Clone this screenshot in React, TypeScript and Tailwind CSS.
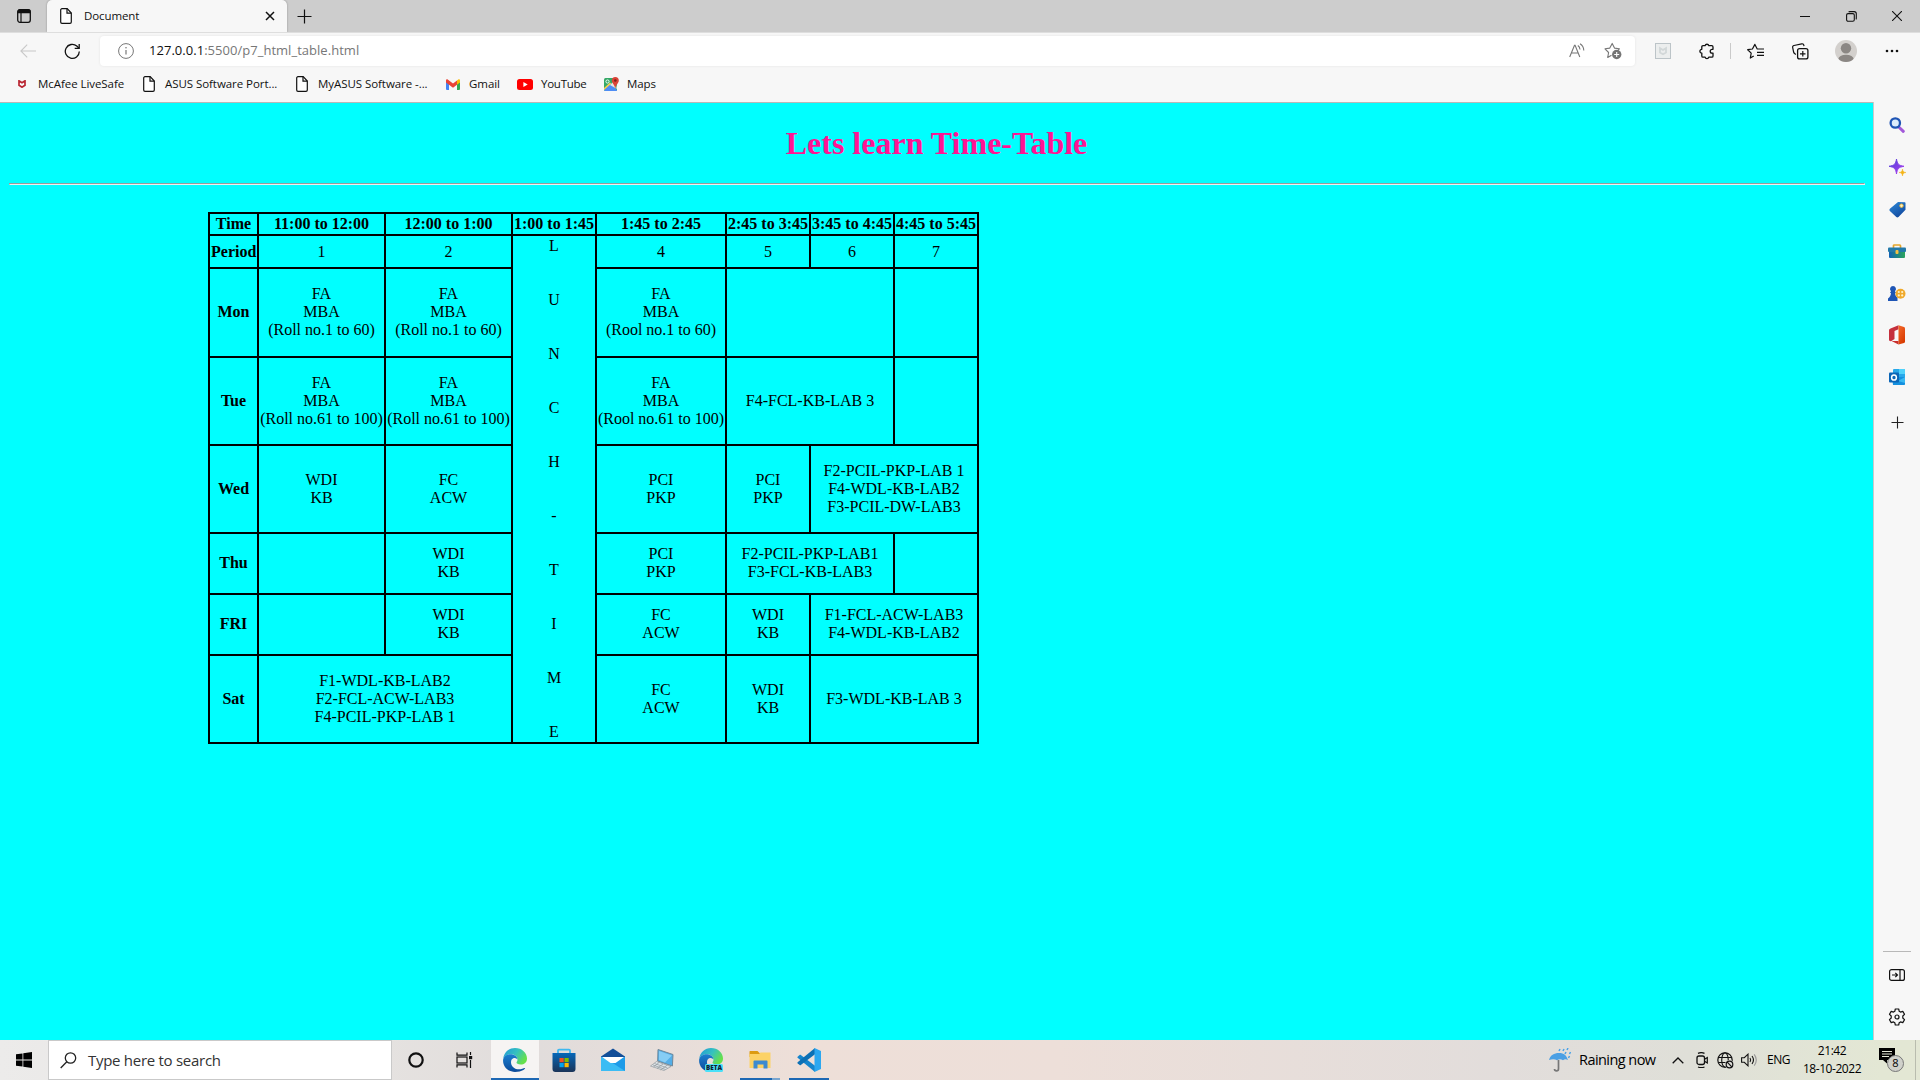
import React from "react";

type Cell = { lines?: string[]; span?: number; lunch?: boolean };
type Row = { day: string; height: string; cells: Cell[] };

const times = ["11:00 to 12:00", "12:00 to 1:00", "1:00 to 1:45", "1:45 to 2:45", "2:45 to 3:45", "3:45 to 4:45", "4:45 to 5:45"];
const c = (...lines: string[]): Cell => ({ lines });
const wide = (...lines: string[]): Cell => ({ lines, span: 2 });

const rows: Row[] = [
  { day: "Period", height: "h-[33px]", cells: [c("1"), c("2"), { lunch: true }, c("4"), c("5"), c("6"), c("7")] },
  { day: "Mon", height: "h-[89px] [&>td]:pb-px [&>th]:pb-[2px]", cells: [c("FA", "MBA", "(Roll no.1 to 60)"), c("FA", "MBA", "(Roll no.1 to 60)"), c("FA", "MBA", "(Rool no.1 to 60)"), wide(), c()] },
  { day: "Tue", height: "h-[88px]", cells: [c("FA", "MBA", "(Roll no.61 to 100)"), c("FA", "MBA", "(Roll no.61 to 100)"), c("FA", "MBA", "(Rool no.61 to 100)"), wide("F4-FCL-KB-LAB 3"), c()] },
  { day: "Wed", height: "h-[88px]", cells: [c("WDI", "KB"), c("FC", "ACW"), c("PCI", "PKP"), c("PCI", "PKP"), wide("F2-PCIL-PKP-LAB 1", "F4-WDL-KB-LAB2", "F3-PCIL-DW-LAB3")] },
  { day: "Thu", height: "h-[61px] [&>td]:pb-px [&>th]:pb-[2px]", cells: [c(), c("WDI", "KB"), c("PCI", "PKP"), wide("F2-PCIL-PKP-LAB1", "F3-FCL-KB-LAB3"), c()] },
  { day: "FRI", height: "h-[61px] [&>td]:pb-px [&>th]:pb-[2px]", cells: [c(), c("WDI", "KB"), c("FC", "ACW"), c("WDI", "KB"), wide("F1-FCL-ACW-LAB3", "F4-WDL-KB-LAB2")] },
  { day: "Sat", height: "h-[88px]", cells: [wide("F1-WDL-KB-LAB2", "F2-FCL-ACW-LAB3", "F4-PCIL-PKP-LAB 1"), c("FC", "ACW"), c("WDI", "KB"), wide("F3-WDL-KB-LAB 3")] },
];

function Svg({ w, h = w, children, className = "" }: { w: number; h?: number; children: React.ReactNode; className?: string }) {
  return (
    <svg width={w} height={h} viewBox={`0 0 ${w} ${h}`} fill="none" className={`block shrink-0 ${className}`}>
      {children}
    </svg>
  );
}

function Slot({ className, children }: { className: string; children?: React.ReactNode }) {
  return <div className={`flex shrink-0 items-center justify-center ${className}`}>{children}</div>;
}

function DocIcon() {
  return (
    <Svg w={12} h={16}>
      <path d="M2 .7h5.2L11.3 5v9a1.3 1.3 0 0 1-1.3 1.3H2A1.3 1.3 0 0 1 .7 14V2A1.3 1.3 0 0 1 2 .7Z" stroke="#111" strokeWidth="1.2" fill="#fff" />
      <path d="M7 .8V5.2h4.2" stroke="#111" strokeWidth="1.2" />
    </Svg>
  );
}

function TabBar() {
  return (
    <div className="flex h-8 bg-[#cdcdcd]">
      <Slot className="w-[47px]">
        <Svg w={16}>
          <rect x="1.7" y="1.7" width="12.6" height="12.6" rx="2.2" stroke="#111" strokeWidth="1.3" />
          <path d="M1.5 3.5C1.5 2 2.3 1.3 3.500 1.300h9c1.200 0 2 .7 2 2.200V5.300H1.500Z" fill="#111" />
          <path d="M5 5v9" stroke="#111" strokeWidth="1.2" />
        </Svg>
      </Slot>
      <div className="flex w-60 items-center rounded-t-[5px] bg-[#f7f7f7] pl-[13px] shadow-[0_0_2px_rgba(0,0,0,0.35)]">
        <DocIcon />
        <span className="ml-3 text-[11.5px] tracking-[-0.1px]">Document</span>
        <Svg w={10} className="mr-[12px] ml-auto">
          <path d="m1 1 8 8M9 1 1 9" stroke="#111" strokeWidth="1.5" />
        </Svg>
      </div>
      <Slot className="w-[35px]">
        <Svg w={15}>
          <path d="M7.500 0.500v14M.5 7.500h14" stroke="#111" strokeWidth="1.200" />
        </Svg>
      </Slot>
      <div className="ml-auto flex">
        <Slot className="w-[46px]">
          <Svg w={10}><path d="M0 5.500h10" stroke="#111" /></Svg>
        </Slot>
        <Slot className="w-[46px]">
          <Svg w={11}>
            <rect x=".6" y="2.600" width="7.700" height="7.700" rx="1.500" stroke="#111" strokeWidth="1.100" />
            <path d="M2.600 1C3 .7 3.300.6 3.800.6H8.200a2.100 2.100 0 0 1 2.100 2.100V7.200c0 .5-.1.800-.4 1.200" stroke="#111" strokeWidth="1.100" />
          </Svg>
        </Slot>
        <Slot className="w-[46px]">
          <Svg w={10}><path d="m0 0 10 10M10 0 0 10" stroke="#111" strokeWidth="1.100" /></Svg>
        </Slot>
      </div>
    </div>
  );
}

function Toolbar() {
  return (
    <div className="flex h-[38px] items-center border-t border-[#dedede] bg-[#f7f7f7] pb-px">
      <Slot className="ml-5 w-4">
        <Svg w={16} h={14}><path d="M16 7H1M7.200.7.900 7l6.300 6.300" stroke="#c8c8c8" strokeWidth="1.100" /></Svg>
      </Slot>
      <Slot className="ml-7 w-4">
        <Svg w={17}>
          <path d="M15.300 8.500A7 7 0 1 1 12.800 3L15 5.200" stroke="#111" strokeWidth="1.300" />
          <path d="M15.200 1v4.400h-4.500" stroke="#111" strokeWidth="1.300" />
        </Svg>
      </Slot>
      <div className="ml-5 flex h-[30px] w-[1535px] items-center rounded-[4px] bg-white pl-[18px] shadow-[0_0_3px_rgba(0,0,0,0.08)]">
        <Svg w={16}>
          <circle cx="8" cy="8" r="7.400" stroke="#777" />
          <path d="M8 7v4.500" stroke="#777" strokeWidth="1.200" />
          <circle cx="8" cy="4.800" r=".8" fill="#777" />
        </Svg>
        <span className="ml-[15px] text-[13px] tracking-[0.03px] text-[#777]">
          <span className="text-[#111]">127.0.0.1</span>:5500/p7_html_table.html
        </span>
        <Svg w={16} className="ml-auto">
          <path d="M.7 14 5.500 2.300h.6L10.800 14M2.400 10h6.800" stroke="#777" strokeWidth="1.100" />
          <path d="M8.800 2.500c1.400.9 2.100 2.200 2.200 4M11 .8c2.400 1.400 3.700 3.700 3.800 6.800" stroke="#777" strokeWidth="1.100" />
        </Svg>
        <Svg w={18} className="mr-[13px] ml-[19px]">
          <path d="M7.500 13.200 3.700 15.500l.9-5L1 6.800l4.800-.7L8.200 1.400l2.300 4.700 4.900.7-1.300 1.300" stroke="#777" strokeWidth="1.100" strokeLinejoin="round" />
          <circle cx="12.700" cy="12.500" r="4.700" fill="#757575" />
          <path d="M12.700 10v5M10.200 12.500h5" stroke="#fff" strokeWidth="1.100" />
        </Svg>
      </div>
      <Slot className="ml-5 w-4">
        <Svg w={16}>
          <rect x=".5" y=".5" width="15" height="15" fill="#eceeee" stroke="#bcc4c8" />
          <path d="M5 5.200v4.200l3 1.800 3-1.800V5.200L8 7Z" stroke="#d2d7d8" strokeWidth="1.800" />
        </Svg>
      </Slot>
      <Slot className="ml-7 w-4">
        <Svg w={16} h={17}>
          <path d="M4 2.700h2.100a1.900 1.900 0 0 1 3.700 0h3a1.200 1.200 0 0 1 1.200 1.200V6.300h-.9a1.900 1.900 0 0 0 0 3.800h.9v2.800a1.200 1.200 0 0 1-1.200 1.200h-3a1.900 1.900 0 0 1-3.700 0H4a1.200 1.200 0 0 1-1.200-1.200V10.100a1.900 1.900 0 0 1 0-3.800V3.900A1.200 1.200 0 0 1 4 2.700Z" stroke="#111" strokeWidth="1.300" strokeLinejoin="round" />
        </Svg>
      </Slot>
      <div className="ml-[15px] h-4 w-px bg-[#cacaca]" />
      <Slot className="ml-4 w-[17px]">
        <Svg w={17}>
          <path d="M6.700 12.900 3.300 15l.9-4.900L.7 6.700l4.700-.7L7.900 1.400 10.200 6H14M10 9.300h7M10 12.300h7M10 6h7" stroke="#111" strokeWidth="1.200" strokeLinejoin="round" />
        </Svg>
      </Slot>
      <Slot className="ml-7 w-[17px]">
        <Svg w={17}>
          <rect x="5.600" y="5.600" width="10.300" height="10.300" rx="2" stroke="#111" strokeWidth="1.300" />
          <path d="M10.800 8v5.500M8 10.800h5.500M3.800 11.500 2.600 10.600C2 10.200 1.800 9.600 1.600 9L.7 4.600c-.3-1 .3-1.900 1.300-2.100L9.700.9c1-.2 1.900.3 2.100 1.300l.2 1" stroke="#111" strokeWidth="1.200" />
        </Svg>
      </Slot>
      <Slot className="ml-[26px] w-[22px]">
        <Svg w={22}>
          <clipPath id="avatar"><circle cx="11" cy="11" r="11" /></clipPath>
          <circle cx="11" cy="11" r="11" fill="#d3d0cd" />
          <g clipPath="url(#avatar)" fill="#8b8784"><circle cx="11" cy="8.200" r="5.200" /><ellipse cx="11" cy="19" rx="7.700" ry="4.300" /></g>
        </Svg>
      </Slot>
      <Slot className="ml-[27px] w-4">
        <Svg w={16} h={4}><circle cx="3" cy="2" r="1.300" fill="#111" /><circle cx="8" cy="2" r="1.300" fill="#111" /><circle cx="13" cy="2" r="1.300" fill="#111" /></Svg>
      </Slot>
    </div>
  );
}

function Bookmarks() {
  return (
    <div className="flex h-8 items-center bg-[#f7f7f7] pb-1 pl-[18px] text-[11.5px] tracking-[-0.06px]">
      <div className="flex w-[125px] items-center gap-3">
        <Svg w={8}><path d="M1 .8v4.400l3 2 3-2V.8L4 2.800Z" stroke="#b92632" strokeWidth="1.700" /></Svg>
        <span>McAfee LiveSafe</span>
      </div>
      <div className="flex w-[153px] items-center gap-[10px]"><DocIcon /><span>ASUS Software Port...</span></div>
      <div className="flex w-[150px] items-center gap-[10px]"><DocIcon /><span>MyASUS Software -...</span></div>
      <div className="flex w-[71px] items-center gap-[9px]">
        <Svg w={14} h={11}>
          <path d="M0 2v8a1 1 0 0 0 1 1h2V4Z" fill="#4285f4" />
          <path d="M14 2v8a1 1 0 0 1-1 1h-2V4Z" fill="#34a853" />
          <path d="M11 1.600 12.300.5C13 0 14 .5 14 1.500V3.500l-3 2.300Z" fill="#fbbc04" />
          <path d="M0 3.500v-2C0 .5 1 0 1.700.5L7 4.500l4-3v4.300L7 8.800Z" fill="#ea4335" />
        </Svg>
        <span>Gmail</span>
      </div>
      <div className="flex w-[87px] items-center gap-2">
        <Svg w={16} h={11}><rect width="16" height="11" rx="2.500" fill="#f00" /><path d="m6.400 3 4.300 2.500-4.300 2.500Z" fill="#fff" /></Svg>
        <span className="tracking-[-0.25px]">YouTube</span>
      </div>
      <div className="flex items-center gap-2">
        <Svg w={15}>
          <rect x="0" y="1" width="13" height="13" rx="1.500" fill="#34a866" />
          <path d="M0 12 6.500 6.500 13 13c0 .6-.5 1-1 1H1.500C.6 14 0 13.500 0 12Z" fill="#4e8df5" />
          <path d="m6 8 5-5 2 9Z" fill="#e8e5df" />
          <path d="m0 11 6-5.500 1.200 1.200L0 13Z" fill="#fbd04b" />
          <circle cx="3.500" cy="4.500" r="1.600" stroke="#fff" strokeWidth=".9" />
          <path d="M11.300 0A3.500 3.500 0 0 0 7.800 3.500c0 2.500 2.700 4 3.300 7.500h.4c.6-3.500 3.300-5 3.300-7.500A3.500 3.500 0 0 0 11.300 0Z" fill="#db4437" />
          <circle cx="11.300" cy="3.500" r="1.300" fill="#7b2119" />
        </Svg>
        <span>Maps</span>
      </div>
    </div>
  );
}

function TimeTable() {
  return (
    <table className="mt-[27px] ml-[208px] w-[771px] table-fixed border-collapse text-center text-base leading-[18px] text-black">
      <colgroup>
        <col className="w-[49px]" /><col className="w-[127px]" /><col className="w-[127px]" /><col className="w-[84px]" />
        <col className="w-[130px]" /><col className="w-[84px]" /><col className="w-[84px]" /><col className="w-[84px]" />
      </colgroup>
      <tbody>
        <tr className="h-[22px] whitespace-nowrap">
          <th className="border-2 border-black p-px">Time</th>
          {times.map((t) => <th key={t} className="border-2 border-black p-px">{t}</th>)}
        </tr>
        {rows.map((row) => (
          <tr key={row.day} className={row.height}>
            <th className="border-2 border-black p-px">{row.day}</th>
            {row.cells.map((cell, i) =>
              cell.lunch ? (
                <td key={i} rowSpan={7} className="border-2 border-black p-0">
                  {"LUNCH-TIME".split("").map((l, k) => <div key={k} className="mb-9 last:mb-0">{l}</div>)}
                </td>
              ) : (
                <td key={i} colSpan={cell.span} className="border-2 border-black p-0 whitespace-nowrap">
                  {cell.lines?.map((l) => <div key={l}>{l}</div>)}
                </td>
              )
            )}
          </tr>
        ))}
      </tbody>
    </table>
  );
}

function Sidebar() {
  return (
    <div className="flex w-[47px] shrink-0 flex-col items-center border-l border-[#c9c9c9] bg-[#f7f7f7] pt-[2px]">
      <Slot className="h-[42px]">
        <Svg w={16}>
          <path d="m9.800 10 4.500 4.300" stroke="#a259d9" strokeWidth="3" strokeLinecap="round" />
          <circle cx="6.300" cy="6" r="4.700" stroke="#1f55b5" strokeWidth="2.300" fill="#dcecfb" />
        </Svg>
      </Slot>
      <Slot className="h-[42px]">
        <Svg w={17}>
          <defs><linearGradient id="spark" x2="1" y2="1"><stop stopColor="#4a43d8" /><stop offset="1" stopColor="#b33bf0" /></linearGradient></defs>
          <path d="M7.500 0c.8 5 2 6.400 7.500 7.300-5.500 1-6.700 2.300-7.500 7.700C6.700 9.600 5.500 8.300 0 7.300 5.500 6.400 6.700 5 7.500 0Z" fill="url(#spark)" stroke="url(#spark)" strokeLinejoin="round" />
          <path d="M13.500 10c.4 2.500 1 3.100 3.500 3.500-2.500.4-3.100 1-3.500 3.500-.4-2.500-1-3.100-3.500-3.500 2.500-.4 3.100-1 3.500-3.500Z" fill="#f4b41a" stroke="#f4b41a" strokeWidth=".5" />
        </Svg>
      </Slot>
      <Slot className="h-[42px]">
        <Svg w={17}>
          <defs><linearGradient id="tag" x2=".6" y2="1"><stop stopColor="#2d8ad8" /><stop offset="1" stopColor="#124aa0" /></linearGradient></defs>
          <path d="m9 1 6.500.3c.6 0 1 .4 1 1v6.500L9.500 16c-.7.6-1.600.6-2.200 0L.9 10c-.6-.6-.6-1.500 0-2.200Z" fill="url(#tag)" />
          <circle cx="12.500" cy="4.700" r="1.700" fill="#fff3c9" stroke="#eebb3c" />
        </Svg>
      </Slot>
      <Slot className="h-[42px]">
        <Svg w={18} h={14}>
          <defs><linearGradient id="box" x2="1"><stop stopColor="#0f62b5" /><stop offset="1" stopColor="#2ba45b" /></linearGradient></defs>
          <path d="M5.500 4V1.800c0-.5.300-.8.800-.8h5.400c.5 0 .8.300.8.800V4" stroke="#e5a52b" strokeWidth="1.700" />
          <rect x="1" y="7" width="16" height="7" rx="1" fill="url(#box)" />
          <rect x="0" y="3.500" width="18" height="4.500" rx="1" fill="#2279a9" />
          <rect x="7.500" y="6" width="3" height="4" rx="1" fill="#f2c044" />
        </Svg>
      </Slot>
      <Slot className="h-[42px]">
        <Svg w={18} h={15}>
          <path d="M5 0a3 3 0 0 1 1.900 5.300L8 6.500 7 7.300c.2 2 1 3.200 2.500 4.500V15H0v-2.500C1.800 11.300 2.800 9.500 3 7.300L2 6.500l1.100-1.200A3 3 0 0 1 5 0Z" fill="#1e55b5" />
          <circle cx="12.500" cy="7.700" r="5" fill="#f0a92c" />
          <circle cx="10.800" cy="6" r="1.100" fill="#fff2cb" /><circle cx="14.200" cy="6" r="1.100" fill="#fff2cb" /><circle cx="10.800" cy="9.400" r="1.100" fill="#fff2cb" /><circle cx="14.200" cy="9.400" r="1.100" fill="#fff2cb" />
        </Svg>
      </Slot>
      <Slot className="h-[42px]">
        <Svg w={16} h={20}>
          <defs><linearGradient id="office" x2=".6" y2="1"><stop stopColor="#f56a2b" /><stop offset="1" stopColor="#d83b01" /></linearGradient></defs>
          <path d="M0 5.500C0 4.500.5 4 1.500 3.500L9.500.3v4L5.500 6v8l-3 2C1 16.500 0 15.800 0 14.500Z" fill="#c5303d" />
          <path d="M9.500.3 15 2c.6.2 1 .6 1 1.300v13.400c0 .7-.4 1.100-1 1.300l-5.500 1.600Z" fill="url(#office)" />
          <path d="M2.500 16h7v3.500Z" fill="#c92f2c" />
        </Svg>
      </Slot>
      <Slot className="h-[42px]">
        <Svg w={16}>
          <rect x="4" y="0" width="12" height="10" rx="1" fill="#28a8ea" /><path d="M10 0h6v5h-6Z" fill="#50d2fb" />
          <path d="M3 8h13v7c0 .6-.4 1-1 1H4Z" fill="#1590df" /><path d="m9 12 7-4v6Z" fill="#38b8f2" />
          <rect x="0" y="3.500" width="10" height="10" rx="1" fill="#0b66b7" />
          <ellipse cx="5" cy="8.500" rx="2.400" ry="2.600" stroke="#fff" strokeWidth="1.500" />
        </Svg>
      </Slot>
      <Slot className="mt-[3px] h-[42px]"><Svg w={13}><path d="M6.500.5v12M.5 6.500h12" stroke="#222" strokeWidth="1.100" /></Svg></Slot>
      <div className="mt-auto h-px w-7 bg-[#b8b8b8]" />
      <Slot className="mt-[2px] h-[42px]">
        <Svg w={16} h={12}>
          <rect x=".6" y=".6" width="14.800" height="10.800" rx="2" stroke="#111" strokeWidth="1.200" />
          <path d="M11 .5v11M3 6h5.300M6.300 3.800 8.500 6 6.300 8.200" stroke="#111" strokeWidth="1.200" />
        </Svg>
      </Slot>
      <Slot className="mb-[2px] h-[42px]">
        <Svg w={18}>
          <path d="M7.300 1h3.400l.5 2.300 1.300.8 2.300-.7 1.700 2.900L14.800 8v2l1.700 1.700-1.700 2.900-2.300-.7-1.300.8-.5 2.300H7.300l-.5-2.300-1.300-.8-2.300.7-1.700-2.900L3.200 10V8L1.500 6.300l1.700-2.900 2.300.7 1.300-.8Z" stroke="#111" strokeWidth="1.200" strokeLinejoin="round" />
          <circle cx="9" cy="9" r="2" stroke="#111" strokeWidth="1.200" />
        </Svg>
      </Slot>
    </div>
  );
}

function EdgeLogo({ beta = false }: { beta?: boolean }) {
  const id = beta ? "beta" : "edge";
  return (
    <svg width="24" height="24" viewBox="0 0 24 24" className="block shrink-0 overflow-visible">
      <defs>
        <linearGradient id={`${id}-top`} x2="1" y2=".5"><stop stopColor="#2098d8" /><stop offset=".55" stopColor="#35c1c0" /><stop offset="1" stopColor="#66e04c" /></linearGradient>
        <linearGradient id={`${id}-low`} x2="0" y2="1"><stop stopColor="#1b7fd0" /><stop offset="1" stopColor="#0c4a99" /></linearGradient>
      </defs>
      <path d="M.3 10.500C1 4.500 6 0 12 0c7 0 12 5 12 10.500 0 4-3 6-6.200 6-3 0-4.300-1.200-4.300-2 0-.6 1-1.200 1-3C14.500 9 12 6.300 8 6.300c-3.700 0-6.500 2-7.700 4.200Z" fill={`url(#${id}-top)`} />
      <path d="M.1 11.800C.5 8.500 3.600 6.200 7.600 6.200c4 0 6.900 2.500 6.900 5.300 0 0-1.500-2-3.700-1.500C7.500 11 7.200 15.500 9.500 18.500c2.500 3 6.500 3.500 9.800 2.200 1.200-.5 2.500-1 2.700-.7.300.4-.6 1.200-1.600 2C18.200 23.300 15.300 24 12 24 5.300 24-.4 18.700.1 11.800Z" fill={`url(#${id}-low)`} />
      {beta && (
        <>
          <rect x="6" y="16" width="18" height="8" rx="1.500" fill="#4ae0f8" />
          <text x="15" y="22.400" textAnchor="middle" fontFamily="Open Sans, sans-serif" fontWeight="800" fontSize="6.300" fill="#102030">BETA</text>
        </>
      )}
    </svg>
  );
}

function TaskApp({ children, active = false, underline = "" }: { children: React.ReactNode; active?: boolean; underline?: string }) {
  return (
    <div className={`flex h-10 shrink-0 flex-col items-center ${active ? "w-12 bg-[#f6f4f3]" : "w-12"}`}>
      <div className="flex h-[38px] items-center pt-[2px]">{children}</div>
      <div className={`h-[2px] ${underline}`} />
    </div>
  );
}

function Taskbar() {
  return (
    <div className="flex h-10 items-center bg-[linear-gradient(90deg,#ecebea_0%,#e5e2e0_20%,#e1dcdb_28%,#eedfd8_42%,#eddfd9_55%,#e2dddb_78%,#dfdfd8_88%,#e3e7d4_98%)]">
      <Slot className="w-12">
        <Svg w={16}><path d="M0 2.300 6.500 1.400v6.200H0ZM7.300 1.200 16 0v7.600H7.300ZM0 8.400h6.500v6.200L0 13.700ZM7.300 8.400H16V16l-8.700-1.200Z" fill="#000" /></Svg>
      </Slot>
      <div className="flex h-10 w-[344px] items-center border border-[#c9c9c9] bg-white pl-[11px]">
        <Svg w={17}><circle cx="10.500" cy="6" r="5.200" stroke="#222" strokeWidth="1.300" /><path d="M6.800 9.700.7 16" stroke="#222" strokeWidth="1.300" /></Svg>
        <span className="ml-[11px] text-[15px] tracking-[-0.28px] text-[#333]">Type here to search</span>
      </div>
      <Slot className="w-12"><Svg w={16}><circle cx="8" cy="8" r="6.700" stroke="#111" strokeWidth="2.200" /></Svg></Slot>
      <Slot className="w-[51px] pr-[3px]">
        <Svg w={17} h={16}>
          <path d="M1 .5v2.700h10V.5M1 15.500v-2.700h10v2.700" stroke="#111" strokeWidth="1.200" />
          <rect x="1" y="5" width="10" height="6" stroke="#111" strokeWidth="1.200" />
          <path d="M14.500 0v3M14.500 8v8" stroke="#111" strokeWidth="1.200" /><rect x="13" y="4" width="3.200" height="3.200" fill="#111" />
        </Svg>
      </Slot>
      <div className="flex gap-px">
        <TaskApp active underline="w-12 bg-[#1d68b4]"><EdgeLogo /></TaskApp>
        <TaskApp>
          <Svg w={24}>
            <defs><linearGradient id="bag" x2="0" y2="1"><stop stopColor="#0667b8" /><stop offset="1" stopColor="#1b3458" /></linearGradient></defs>
            <path d="M6 6V2.500C6 2 6.300 1.700 7 1.700h10c.7 0 1 .3 1 .8V6" stroke="#3fb8ef" strokeWidth="1.800" />
            <path d="M.5 5h23v16a3 3 0 0 1-3 3h-17a3 3 0 0 1-3-3Z" fill="url(#bag)" />
            <path d="M7.500 10h4.200v4.200H7.500Z" fill="#f25022" /><path d="M12.500 10h4.200v4.200h-4.200Z" fill="#7fba00" /><path d="M7.500 15h4.200v4.200H7.500Z" fill="#00a4ef" /><path d="M12.500 15h4.200v4.200h-4.200Z" fill="#ffb900" />
          </Svg>
        </TaskApp>
        <TaskApp>
          <Svg w={24}>
            <path d="M0 8.500 12 .5l12 8v3H0Z" fill="#124e98" />
            <path d="M0 9h24v14H0Z" fill="#1e9be8" /><path d="M0 9v14h24L10 14Z" fill="#3bbcf4" />
            <path d="M1 9h22l-8.500 6H9.500Z" fill="#fff" />
          </Svg>
        </TaskApp>
        <TaskApp>
          <Svg w={24}>
            <path d="m8 1.500 15 5-.6 11.500L7.700 13Z" fill="#53aee8" stroke="#6f8798" /><path d="m9 3 13 4.500-7 7-6-2.500Z" fill="#86cdf5" />
            <path d="m6.500 13.500 14.500 5L14 22.500.5 18Z" fill="#dfe4e7" stroke="#8f989e" strokeWidth=".7" /><path d="m4.500 15.500 13 4.500M3 17l12.500 4.500M9 14.500 3.500 19M13 16l-6 4.500M17 17.300 10.500 22" stroke="#8f989e" strokeWidth=".7" />
          </Svg>
        </TaskApp>
        <TaskApp><EdgeLogo beta /></TaskApp>
        <TaskApp underline="w-10 bg-[linear-gradient(90deg,#1d68b4_80%,#79a5cf_80%)]">
          <Svg w={22} h={20}>
            <path d="M1 1h7.500l2 2H21v4H.5V1.500Z" fill="#dc9b12" /><path d="M.5 4H10l1.500-1.500H21.500V18H.5Z" fill="#fcd266" />
            <path d="M4.500 18.500v-7c0-.6.400-1 1-1h12c.6 0 1 .4 1 1v7h-4v-4h-6v4Z" fill="#3c8ad0" />
          </Svg>
        </TaskApp>
        <TaskApp underline="w-10 bg-[#1d68b4]">
          <Svg w={24}>
            <path d="m.6 8.700 2-1.700c.4-.3.800-.3 1.200 0L18 17.800V24L.6 9.700c-.3-.3-.3-.7 0-1Z" fill="#1584cc" />
            <path d="m.6 15.300 2 1.700c.4.3.800.3 1.200 0L18 6.200V0L.6 14.300c-.3.300-.3.700 0 1Z" fill="#0c70b5" />
            <path d="M17.500 0 24 3v18l-6.500 3Z" fill="#2ca7f0" />
          </Svg>
        </TaskApp>
      </div>
      <div className="ml-auto flex items-center text-black">
        <Svg w={24}>
          <path d="M1 12C2.500 7 6 5 11 5s7.500 2.500 9 7c-2-1-3.500-1-5 .3-2-1.300-4-1.300-6 0-2-1.300-5-1.300-8-.3Z" fill="#4a9fe4" />
          <path d="M10.500 12v9c0 2.500-4 2.500-4 0" stroke="#777" strokeWidth="1.700" />
          <path d="m12 1-1 2M16 1l-1 2M20 0l-1 2M18 4l-1 2M22.500 4l-1 2M21.500 8l-1 2" stroke="#49a1e8" strokeWidth="1.500" />
        </Svg>
        <span className="ml-[7px] w-[76px] text-[14.5px] tracking-[-0.55px] whitespace-nowrap">Raining now</span>
        <Slot className="ml-[17px] w-3"><Svg w={12} h={7}><path d="m.7 6.300 5.300-5.300 5.300 5.300" stroke="#111" strokeWidth="1.300" /></Svg></Slot>
        <Slot className="ml-[12px] w-3">
          <Svg w={12} h={16}><rect x="1" y="4" width="7.500" height="8.500" rx="2" stroke="#111" strokeWidth="1.300" /><path d="m8.500 7.300 2.800-1.800v5.500L8.500 9.200M2 1.400c2-1 4.500-1 6.500 0M2 15c2 .8 4.500.8 6.500 0" stroke="#111" strokeWidth="1.200" /></Svg>
        </Slot>
        <Slot className="ml-[9px] w-4">
          <Svg w={17}>
            <circle cx="8" cy="8" r="7.200" stroke="#111" strokeWidth="1.200" /><ellipse cx="8" cy="8" rx="3.300" ry="7.200" stroke="#111" strokeWidth="1.100" /><path d="M1.500 5.500h13M1.500 10.500h13" stroke="#111" strokeWidth="1.100" />
            <circle cx="12.500" cy="12.500" r="4.500" fill="#dddcd7" /><circle cx="12.500" cy="12.500" r="3.300" stroke="#111" strokeWidth="1.200" /><path d="m10.200 10.200 4.600 4.600" stroke="#111" strokeWidth="1.200" />
          </Svg>
        </Slot>
        <Slot className="ml-[8px] w-4">
          <Svg w={17} h={14}><path d="M.6 4.700h2.700L7 1.200v11.600L3.300 9.300H.6Z" stroke="#111" strokeWidth="1.100" /><path d="M9 5c.8 1.200.8 2.800 0 4M11 3c1.700 2.300 1.700 5.700 0 8" stroke="#111" strokeWidth="1.100" /><path d="M13.200 1.300c2.500 3.400 2.500 8 0 11.400" stroke="#999" strokeWidth="1.100" /></Svg>
        </Slot>
        <span className="ml-[10px] w-[24px] text-[12px] tracking-[-0.5px]">ENG</span>
        <div className="ml-[11px] flex w-[60px] flex-col items-center text-[12px] leading-[18px] tracking-[-0.45px] whitespace-nowrap">
          <span>21:42</span><span>18-10-2022</span>
        </div>
        <div className="relative ml-[17px] h-6 w-[25px]">
          <Svg w={16} h={16}><path d="M0 0h16v12H8v3.500L4 12H0Z" fill="#000" /><path d="M3 3.500h10M3 6h10M3 8.500h7" stroke="#e3e7d8" strokeWidth="1.200" /></Svg>
          <div className="absolute top-[7px] left-[8px] flex size-[17px] items-center justify-center rounded-full border border-[#777] bg-[#d0d1cb] text-[11px]">8</div>
        </div>
        <div className="ml-[11px] h-10 w-px bg-[#b9bcae]" />
        <div className="w-1" />
      </div>
    </div>
  );
}

export default function App() {
  return (
    <div className="flex h-[1080px] w-[1920px] flex-col overflow-hidden bg-[#f7f7f7] font-['Open_Sans','Noto_Sans',sans-serif] text-[#111]">
      <TabBar />
      <Toolbar />
      <Bookmarks />
      <div className="flex min-h-0 flex-1">
        <main className="flex-1 border-t border-[#b8b8b8] bg-[#00ffff] font-['Liberation_Serif','Times_New_Roman',serif]">
          <h1 className="mt-[22px] text-center text-[32px] leading-9 font-bold text-[#ff1493]">Lets learn Time-Table</h1>
          <hr className="mr-2 ml-[9px] mt-[22px] h-[2px] border border-t-[#9a9a9a] border-r-[#eee] border-b-[#eee] border-l-[#9a9a9a]" />
          <TimeTable />
        </main>
        <Sidebar />
      </div>
      <Taskbar />
    </div>
  );
}
